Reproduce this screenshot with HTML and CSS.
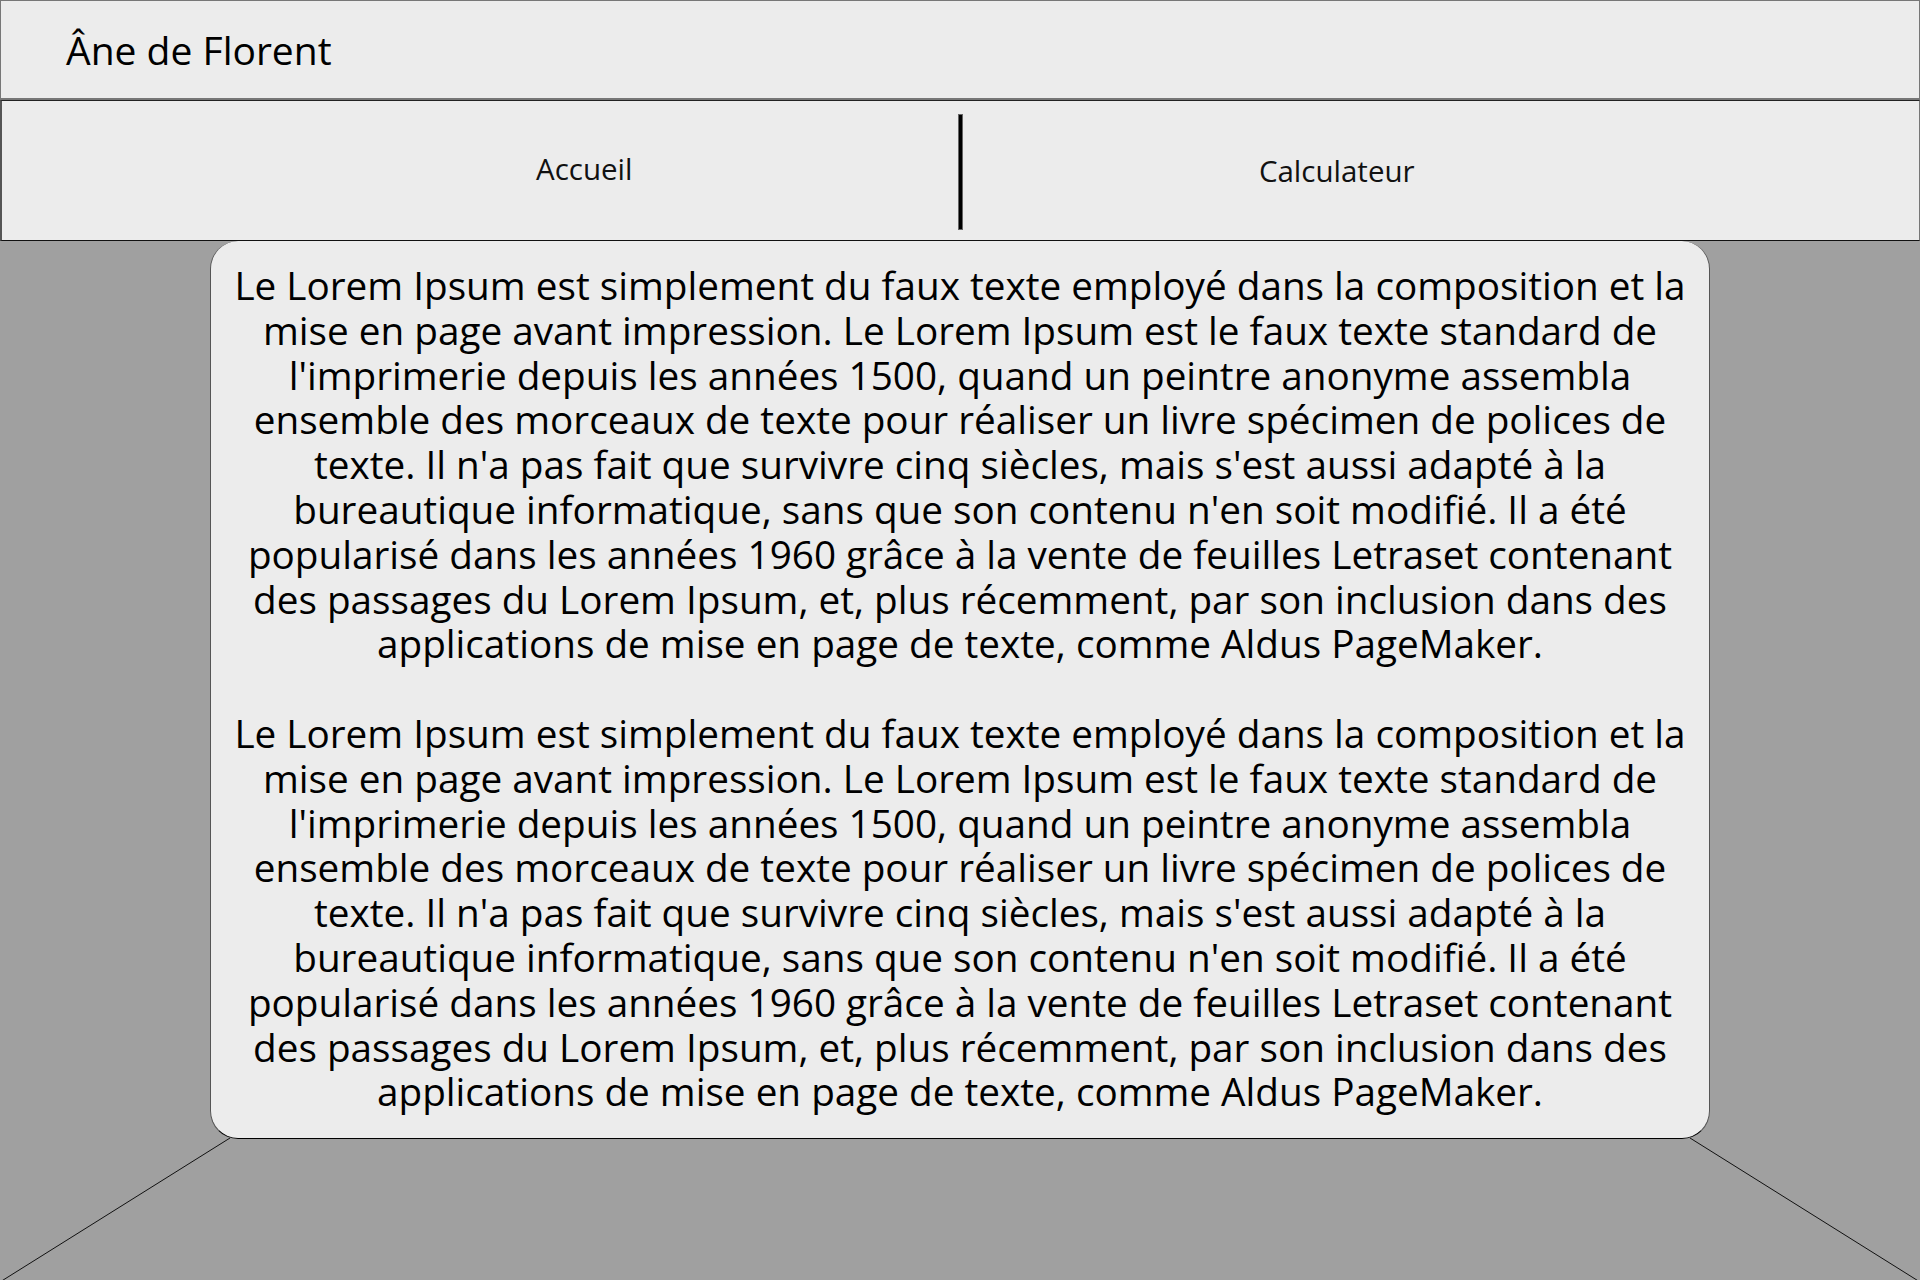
FILE: index.html
```html
<!DOCTYPE html>
<html lang="fr">
<head>
  <meta charset="UTF-8" />
  <meta name="viewport" content="width=device-width, initial-scale=1.0" />
  <title>Âne de Florent</title>
  <link rel="stylesheet" href="styles.css">
</head>
<body>
  <svg class="perspective" viewBox="0 0 1920 1280" preserveAspectRatio="none">
    <line x1="230" y1="1138" x2="0" y2="1282" />
    <line x1="1690" y1="1138" x2="1920" y2="1282" />
  </svg>

  <header class="site-header">
    <span class="site-title">Âne de Florent</span>
  </header>

  <nav class="main-nav">
    <div class="nav-inner">
      <a class="nav-link nav-link-left" href="#">Accueil</a>
      <span class="nav-sep"></span>
      <a class="nav-link" href="#">Calculateur</a>
    </div>
  </nav>

  <main class="content">
    <p>Le Lorem Ipsum est simplement du faux texte employé dans la composition et la mise en page avant impression. Le Lorem Ipsum est le faux texte standard de l'imprimerie depuis les années 1500, quand un peintre anonyme assembla ensemble des morceaux de texte pour réaliser un livre spécimen de polices de texte. Il n'a pas fait que survivre cinq siècles, mais s'est aussi adapté à la bureautique informatique, sans que son contenu n'en soit modifié. Il a été popularisé dans les années 1960 grâce à la vente de feuilles Letraset contenant des passages du Lorem Ipsum, et, plus récemment, par son inclusion dans des applications de mise en page de texte, comme Aldus PageMaker.</p>
    <p>Le Lorem Ipsum est simplement du faux texte employé dans la composition et la mise en page avant impression. Le Lorem Ipsum est le faux texte standard de l'imprimerie depuis les années 1500, quand un peintre anonyme assembla ensemble des morceaux de texte pour réaliser un livre spécimen de polices de texte. Il n'a pas fait que survivre cinq siècles, mais s'est aussi adapté à la bureautique informatique, sans que son contenu n'en soit modifié. Il a été popularisé dans les années 1960 grâce à la vente de feuilles Letraset contenant des passages du Lorem Ipsum, et, plus récemment, par son inclusion dans des applications de mise en page de texte, comme Aldus PageMaker.</p>
  </main>
</body>
</html>
```
FILE: styles.css
```css
body {
  font-family: "Open Sans", "Noto Sans", sans-serif;
  color: #000;
  background: #a0a0a0;
  margin: 0;
  min-height: 100vh;
  position: relative;
}
.perspective {
  position: absolute;
  top: 0;
  left: 0;
  width: 100%;
  height: 100%;
  z-index: 0;
}
.perspective line {
  stroke: #111;
  stroke-width: 1;
}
.site-header {
  position: relative;
  z-index: 1;
  height: 100px;
  box-sizing: border-box;
  display: flex;
  align-items: center;
  padding-left: 65px;
  background: #ececec;
  border: 1px solid #777;
  border-bottom: 2px solid #777;
}
.site-title {
  font-size: 39px;
}
.main-nav {
  position: relative;
  z-index: 1;
  height: 141px;
  box-sizing: border-box;
  background: #ececec;
  border-top: 1px solid #222;
  border-left: 2px solid #555;
  border-right: 1px solid #777;
  border-bottom: 1px solid #111;
}
.nav-inner {
  width: 1500px;
  height: 100%;
  margin: 0 auto;
  display: flex;
  align-items: center;
}
.nav-link {
  flex: 1;
  text-align: center;
  font-size: 29.5px;
  color: #111;
  text-decoration: none;
}
.nav-link-left {
  padding-bottom: 4px;
}
.nav-sep {
  width: 3px;
  height: 114px;
  margin-top: 2px;
  background: #000;
  border: 1px solid #666;
}
.content {
  position: relative;
  z-index: 1;
  width: 1500px;
  box-sizing: border-box;
  margin: 0 auto;
  padding: 22px 20px 24px;
  background: #ececec;
  border: 1px solid #555;
  border-top: none;
  border-bottom-color: #000;
  border-radius: 28px;
  text-align: center;
  font-size: 38.7px;
  line-height: 44.8px;
}
.content p {
  margin: 0 0 44.8px;
}
.content p:last-child {
  margin-bottom: 0;
}
```
